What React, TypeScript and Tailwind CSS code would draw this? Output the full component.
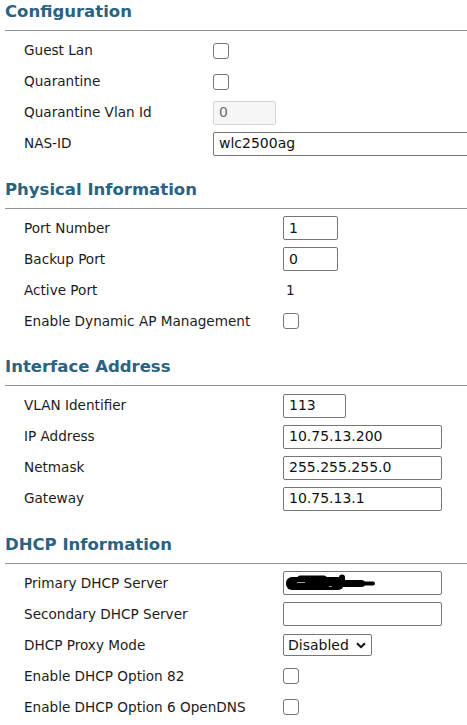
import React from 'react';

type Field =
  | { kind: 'check' }
  | { kind: 'text'; value: string; width: string; disabled?: boolean }
  | { kind: 'static'; value: string }
  | { kind: 'select'; value: string }
  | { kind: 'redacted' };

interface RowDef {
  label: string;
  field: Field;
}

interface SectionDef {
  title: string;
  labelCol: string;
  rows: RowDef[];
}

const sections: SectionDef[] = [
  {
    title: 'Configuration',
    labelCol: 'w-[189px]',
    rows: [
      { label: 'Guest Lan', field: { kind: 'check' } },
      { label: 'Quarantine', field: { kind: 'check' } },
      { label: 'Quarantine Vlan Id', field: { kind: 'text', value: '0', width: 'w-[63px]', disabled: true } },
      { label: 'NAS-ID', field: { kind: 'text', value: 'wlc2500ag', width: 'w-[270px]' } },
    ],
  },
  {
    title: 'Physical Information',
    labelCol: 'w-[259px]',
    rows: [
      { label: 'Port Number', field: { kind: 'text', value: '1', width: 'w-[55px]' } },
      { label: 'Backup Port', field: { kind: 'text', value: '0', width: 'w-[55px]' } },
      { label: 'Active Port', field: { kind: 'static', value: '1' } },
      { label: 'Enable Dynamic AP Management', field: { kind: 'check' } },
    ],
  },
  {
    title: 'Interface Address',
    labelCol: 'w-[259px]',
    rows: [
      { label: 'VLAN Identifier', field: { kind: 'text', value: '113', width: 'w-[63px]' } },
      { label: 'IP Address', field: { kind: 'text', value: '10.75.13.200', width: 'w-[159px]' } },
      { label: 'Netmask', field: { kind: 'text', value: '255.255.255.0', width: 'w-[159px]' } },
      { label: 'Gateway', field: { kind: 'text', value: '10.75.13.1', width: 'w-[159px]' } },
    ],
  },
  {
    title: 'DHCP Information',
    labelCol: 'w-[259px]',
    rows: [
      { label: 'Primary DHCP Server', field: { kind: 'redacted' } },
      { label: 'Secondary DHCP Server', field: { kind: 'text', value: '', width: 'w-[159px]' } },
      { label: 'DHCP Proxy Mode', field: { kind: 'select', value: 'Disabled' } },
      { label: 'Enable DHCP Option 82', field: { kind: 'check' } },
      { label: 'Enable DHCP Option 6 OpenDNS', field: { kind: 'check' } },
    ],
  },
];

const Checkbox = () => (
  <span className="block w-[16px] h-[16px] border border-[#767676] rounded-[3px] bg-white" />
);

const Control = ({ field }: { field: Field }) => {
  switch (field.kind) {
    case 'check':
      return <Checkbox />;
    case 'static':
      return <span className="pl-[3px]">{field.value}</span>;
    case 'text':
      return (
        <div
          className={[
            'h-[24px] flex items-center pl-[5px] rounded-[2px] border text-[14px] whitespace-nowrap overflow-hidden',
            field.width,
            field.disabled
              ? 'bg-[#f6f6f6] border-[#d4d4d4] text-[#6d6d6d]'
              : 'bg-white border-[#767676] text-[#111]',
          ].join(' ')}
        >
          {field.value}
        </div>
      );
    case 'select':
      return (
        <div className="h-[22px] w-[89px] flex items-center justify-between pl-[4px] pr-[5px] rounded-[2px] border border-[#767676] bg-white text-[14px] text-[#111]">
          <span>{field.value}</span>
          <svg width="10" height="7" viewBox="0 0 10 7" aria-hidden="true">
            <path d="M1 1.2 L5 5.2 L9 1.2" fill="none" stroke="#111" strokeWidth="2" />
          </svg>
        </div>
      );
    case 'redacted':
      return (
        <div className="h-[24px] w-[159px] flex items-center pl-[1px] rounded-[2px] border border-[#767676] bg-white">
          {/* address blacked out by hand */}
          <svg className="w-[92px] h-[18px] shrink-0" viewBox="0 0 92 18" aria-hidden="true">
            <rect x="1" y="3" width="58" height="13" rx="6" fill="#000" />
            <rect x="12" y="1.5" width="30" height="7" rx="3.5" fill="#000" />
            <rect x="54" y="0.5" width="6" height="12" rx="3" fill="#000" />
            <rect x="54" y="6" width="26" height="7" rx="3.5" fill="#000" />
            <rect x="70" y="7.5" width="20" height="4" rx="2" fill="#000" />
            <rect x="12" y="8" width="8" height="1" fill="#fff" opacity="0.6" />
            <rect x="44" y="12" width="3" height="1" fill="#fff" opacity="0.6" />
          </svg>
        </div>
      );
  }
};

const Section = ({ section }: { section: SectionDef }) => (
  <section className="pt-[2px] mb-[18.5px]">
    <div className="ml-[5px] pb-[8px] border-b border-[#8f959b]">
      <h2 className="text-[16.5px] leading-[20px] font-bold text-[#2a6282] whitespace-nowrap">
        {section.title}
      </h2>
    </div>
    <div className="mt-[4px] pl-[24px]">
      {section.rows.map((row) => (
        <div key={row.label} className="h-[31px] flex items-center">
          <div className={['shrink-0 whitespace-nowrap', section.labelCol].join(' ')}>{row.label}</div>
          <div className="shrink-0">
            <Control field={row.field} />
          </div>
        </div>
      ))}
    </div>
  </section>
);

export default function App() {
  return (
    <div
      className="w-[467px] h-[725px] overflow-hidden bg-white text-[13.6px] text-[#1b1b1b]"
      style={{ fontFamily: '"DejaVu Sans", Verdana, sans-serif' }}
    >
      {sections.map((s) => (
        <Section key={s.title} section={s} />
      ))}
    </div>
  );
}
